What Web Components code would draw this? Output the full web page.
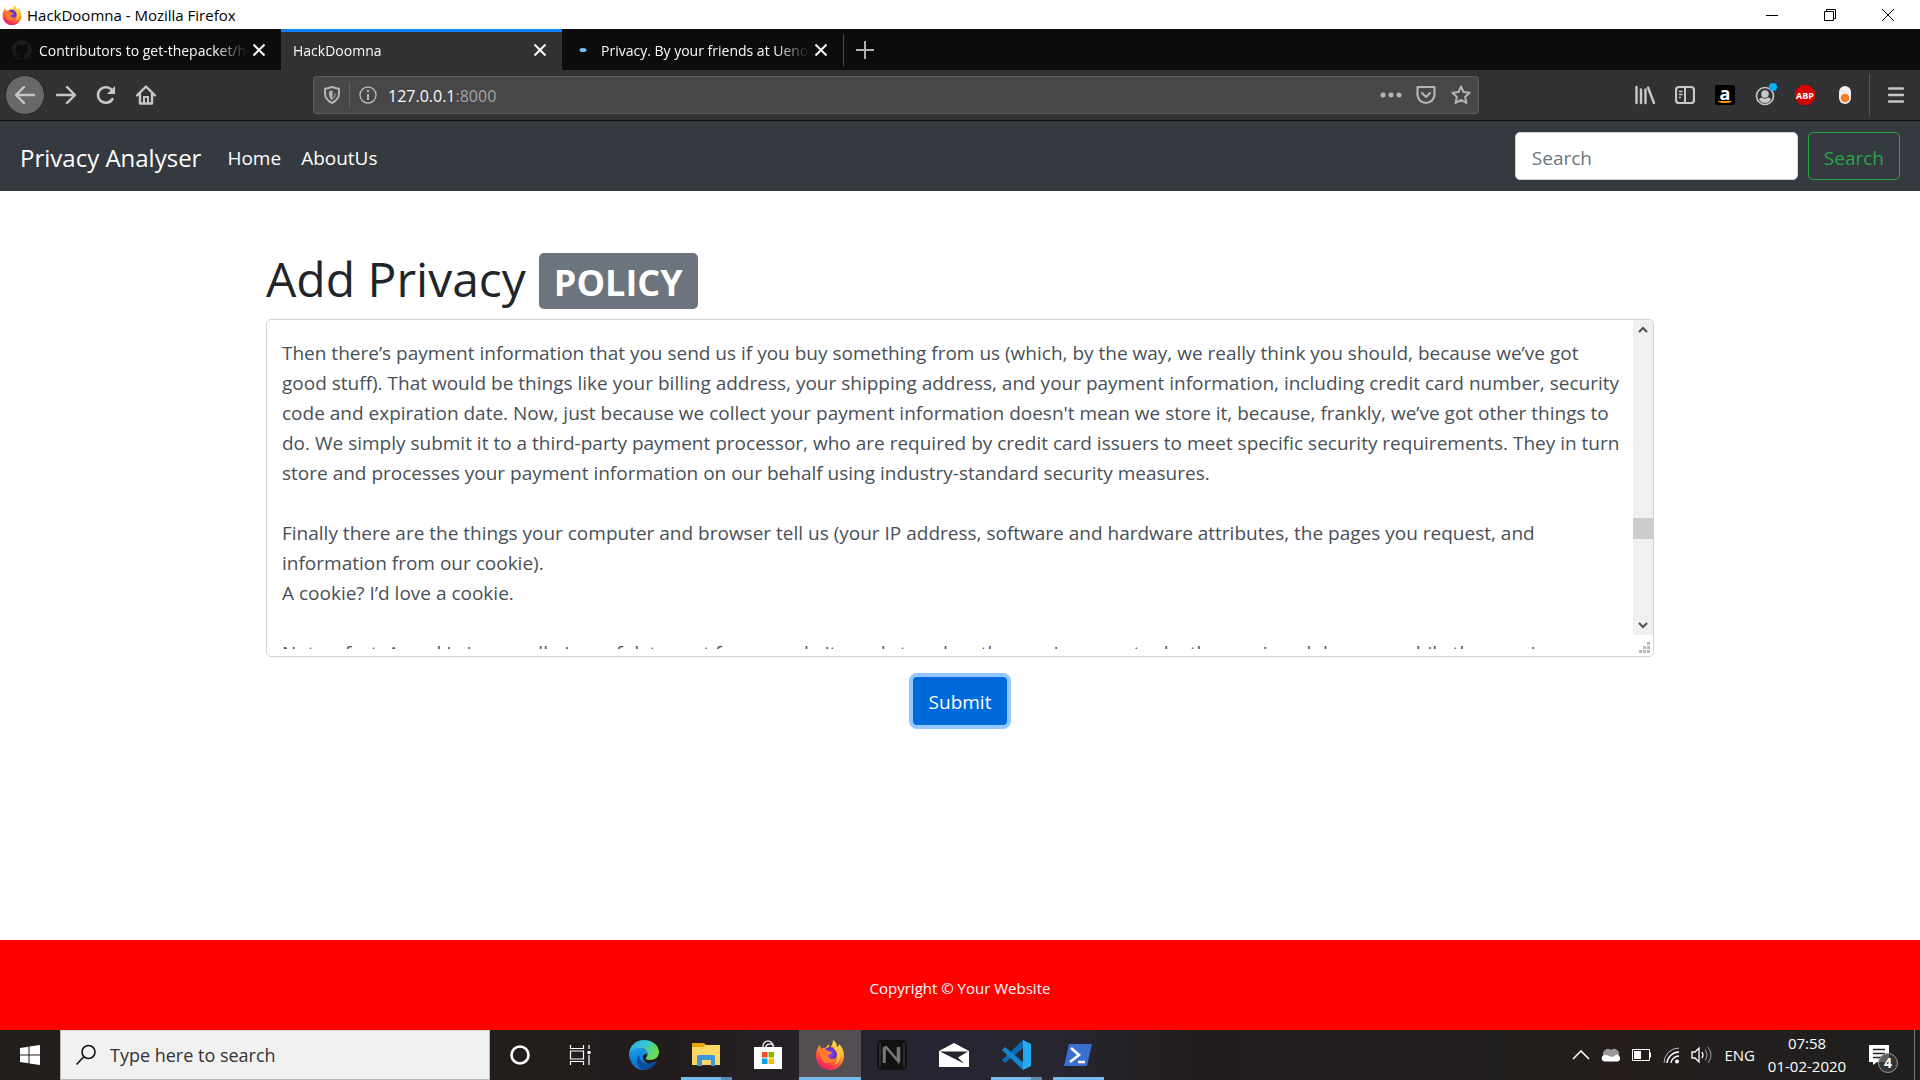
<!DOCTYPE html>
<html lang="en">
<head>
<meta charset="utf-8">
<title>HackDoomna</title>
<style>
  html, body { margin: 0; height: 100%; }
  body {
    font-family: "Open Sans", "Noto Sans", sans-serif;
    background: #fff;
    overflow: hidden;
  }
</style>
</head>
<body>
<desktop-shell>
  <window-title slot="window">HackDoomna - Mozilla Firefox</window-title>
  <tab-strip slot="window">
    <browser-tab icon="github">Contributors to get-thepacket/h</browser-tab>
    <browser-tab active>HackDoomna</browser-tab>
    <browser-tab icon="loading">Privacy. By your friends at Ueno</browser-tab>
  </tab-strip>
  <browser-toolbar slot="window"></browser-toolbar>
  <site-nav slot="window" brand="Privacy Analyser">
    <a href="#home">Home</a>
    <a href="#about">AboutUs</a>
  </site-nav>
  <policy-form slot="window"></policy-form>
  <site-footer slot="window">Copyright © Your Website</site-footer>
  <task-bar slot="taskbar"></task-bar>
</desktop-shell>

<script>
(function () {

  // shared reset, put in front of every element's own styles
  const base = `
    :host, *, *::before, *::after { box-sizing: border-box; }
    button, input, textarea { font: inherit; margin: 0; }
    button { border: 0; padding: 0; background: none; color: inherit; }
    svg { display: block; flex: none; }
  `;

  function define(name, css, html, setup) {
    const tmpl = document.createElement('template');
    tmpl.innerHTML = `<style>${base}${css}</style>${html}`;

    customElements.define(name, class extends HTMLElement {
      constructor() {
        super();
        this._shadowRoot = this.attachShadow({mode: 'open'});
        this._shadowRoot.appendChild(tmpl.content.cloneNode(true));
      }
      connectedCallback() {
        if (setup) setup.call(this, this._shadowRoot);
      }
    });
  }

  //Icons
  const ICONS = {
    firefox: ['0 0 30 30', `
      <defs>
        <linearGradient id="ff" x1=".8" y1="0" x2=".3" y2="1"><stop offset="0" stop-color="#fff44f"/><stop offset=".35" stop-color="#ffb02e"/><stop offset=".65" stop-color="#ff5a36"/><stop offset="1" stop-color="#f0186c"/></linearGradient>
        <radialGradient id="fp"><stop offset="0" stop-color="#8a4dff"/><stop offset="1" stop-color="#5a2bb8"/></radialGradient>
      </defs>
      <path fill="url(#ff)" d="M18 0c3 2 4 4 4 7 2-1 2-2 2-3 4 4 5 8 5 12 0 8-6 14-14 14S1 24 1 16c0-5 1-8 4-11l1 4c1-1 2-1 4-1l4-4c0 2 0 3 1 4 2-3 3-5 3-8z"/>
      <circle cx="15" cy="14" r="7" fill="url(#fp)"/>
      <path fill="#ff7a2e" d="M5 10c3-2 6-1 8 1l4 1c0 2-3 2-4 4 1 3 5 4 8 2-2 5-9 7-13 3-3-3-4-7-3-11z"/>
      <path fill="#ffc83a" d="M20 6c6 4 7 10 4 15-1 2-3 3-5 4 5-5 5-13-1-17z"/>`],
    github: ['0 0 16 16', `<path fill="currentColor" d="M8 0C3.6 0 0 3.6 0 8c0 3.5 2.3 6.500 5.500 7.600.4.1.5-.2.5-.4v-1.400c-2.200.5-2.700-1-2.700-1-.4-.9-.9-1.200-.9-1.200-.7-.5.1-.5.1-.5.8.1 1.200.8 1.200.8.7 1.300 1.900.9 2.300.7.1-.5.3-.9.5-1.100-1.800-.2-3.600-.9-3.600-4 0-.9.3-1.600.8-2.100-.1-.2-.4-1 .1-2.100 0 0 .7-.2 2.200.8a7.500 7.500 0 0 1 4 0c1.500-1 2.200-.8 2.200-.8.4 1.100.2 1.900.1 2.100.5.6.8 1.300.8 2.100 0 3.100-1.900 3.700-3.700 3.900.3.3.6.8.6 1.500v2.200c0 .2.1.5.6.4A8 8 0 0 0 8 0z"/>`],
    loading: ['0 0 20 20', `<ellipse cx="9" cy="10" rx="3.500" ry="2" fill="#75bfff"/>`],
    close: ['0 0 14 14', `<path d="M1.500 1.500l11 11M12.500 1.500l-11 11" stroke="currentColor" stroke-width="2"/>`],
    plus: ['0 0 18 18', `<path d="M9 0v18M0 9h18" stroke="currentColor" stroke-width="2"/>`],
    minimize: ['0 0 12 12', `<path d="M0 6.500h12" stroke="currentColor"/>`],
    restore: ['0 0 12 12', `<path d="M.5 2.500h9v9h-9zM2.500 2.500v-2h9v9h-2" fill="none" stroke="currentColor"/>`],
    exit: ['0 0 12 12', `<path d="M0 0l12 12M12 0L0 12" stroke="currentColor"/>`],
    back: ['0 0 20 20', `<path d="M19 10H2M9 2l-8 8 8 8" fill="none" stroke="currentColor" stroke-width="2.400" stroke-linecap="round" stroke-linejoin="round"/>`],
    forward: ['0 0 20 20', `<path d="M1 10h17M11 2l8 8-8 8" fill="none" stroke="currentColor" stroke-width="2.400" stroke-linecap="round" stroke-linejoin="round"/>`],
    reload: ['0 0 20 20', `<path d="M16.500 14a7.800 7.800 0 1 1 .3-7.500" fill="none" stroke="currentColor" stroke-width="2.500" stroke-linecap="round"/><path d="M19 1v8h-8z" fill="currentColor"/>`],
    home: ['0 0 20 20', `<path d="M1 10.500L10 1.500l9 9M4 9v9.500h12V9" fill="none" stroke="currentColor" stroke-width="2.400" stroke-linecap="round" stroke-linejoin="round"/><path d="M8 18v-6h4v6" fill="none" stroke="currentColor" stroke-width="2"/>`],
    shield: ['0 0 18 18', `<path d="M9 1l7 2v4c0 5-2.500 8-7 10-4.500-2-7-5-7-10V3z" fill="none" stroke="currentColor" stroke-width="2" stroke-linejoin="round"/><path d="M9 4.500L6 5.400V8c0 3 1 4.600 3 6z" fill="currentColor"/><path d="M9 4.500v9c2-1.400 3-3 3-6" fill="none" stroke="currentColor"/>`],
    info: ['0 0 18 18', `<circle cx="9" cy="9" r="8" fill="none" stroke="currentColor" stroke-width="1.500"/><circle cx="9" cy="5" r="1.300" fill="currentColor"/><path d="M9 8v6" stroke="currentColor" stroke-width="2"/>`],
    dots: ['0 0 22 20', `<g fill="currentColor"><circle cx="3" cy="10" r="2.500"/><circle cx="11" cy="10" r="2.500"/><circle cx="19" cy="10" r="2.500"/></g>`],
    pocket: ['0 0 20 20', `<path d="M1.500 2h17v7.500a8.500 8.500 0 0 1-17 0z" fill="none" stroke="currentColor" stroke-width="2.200" stroke-linejoin="round"/><path d="M6 8l4 4 4-4" fill="none" stroke="currentColor" stroke-width="2.200" stroke-linecap="round" stroke-linejoin="round"/>`],
    star: ['0 0 20 20', `<path d="M10 1.500l2.600 5.600 6 .7-4.500 4.100 1.300 6.100-5.400-3.100L4.600 18l1.300-6.100L1.400 7.800l6-.7z" fill="none" stroke="currentColor" stroke-width="2" stroke-linejoin="round"/>`],
    library: ['0 0 20 20', `<path d="M1.500 2v16M6 4.500V18M10.500 4.500V18M13 2.500L19 18" stroke="currentColor" stroke-width="2.400" stroke-linecap="round"/>`],
    sidebar: ['0 0 20 20', `<rect x="1" y="2" width="18" height="16" rx="3" fill="none" stroke="currentColor" stroke-width="2.200"/><path d="M10 2v16" stroke="currentColor" stroke-width="2"/><path d="M4 6.500h3.500M4 9.500h3.500M4 12.500h2" stroke="currentColor" stroke-width="1.400"/>`],
    account: ['0 0 24 24', `<circle cx="12" cy="13" r="8.500" fill="none" stroke="currentColor" stroke-width="1.600"/><circle cx="12" cy="11" r="3.800" fill="currentColor"/><path d="M6 16c1.500-1.500 2.500-1.500 3-1.500 2 1.500 4 1.500 6 0 .5 0 1.500 0 3 1.500-1 2.500-3 4-6 4s-5-1.500-6-4z" fill="currentColor"/><circle cx="20" cy="4" r="4" fill="#00b3f4"/>`],
    toggle: ['0 0 12 20', `<rect x="0" y="1" width="12" height="18" rx="6" fill="#f0f0f0"/><circle cx="6" cy="13" r="4.300" fill="#f47a2c"/>`],
    menu: ['0 0 16 18', `<path d="M1 2.500h14M1 9h14M1 15.500h14" stroke="currentColor" stroke-width="2.400" stroke-linecap="round"/>`],
    up: ['0 0 10 10', `<path d="M1 7l4-4 4 4" fill="none" stroke="currentColor" stroke-width="2"/>`],
    down: ['0 0 10 10', `<path d="M1 3l4 4 4-4" fill="none" stroke="currentColor" stroke-width="2"/>`],
    grip: ['0 0 12 12', `<path fill="currentColor" d="M8 0h3v3H8zM4 4h3v3H4zM8 4h3v3H8zM0 8h3v3H0zM4 8h3v3H4zM8 8h3v3H8z"/>`],

    //Taskbar
    windows: ['0 0 20 20', `<path fill="currentColor" d="M0 3l8.500-1.200v7.700H0zM9.500 1.600L20 0v9.500H9.500zM0 10.500h8.500v7.700L0 17zM9.500 10.500H20V20L9.500 18.400z"/>`],
    search: ['0 0 22 22', `<circle cx="13.500" cy="8" r="6.500" fill="none" stroke="currentColor" stroke-width="1.600"/><path d="M9 12.500L1.500 20.500" stroke="currentColor" stroke-width="1.600"/>`],
    cortana: ['0 0 20 20', `<circle cx="10" cy="10" r="8.500" fill="none" stroke="currentColor" stroke-width="2.600"/>`],
    taskview: ['0 0 22 20', `<path d="M1.500 0v3.500h13V0M1.500 20v-3.500h13V20M1.500 6h13v8h-13zM20 0v4M20 10v10" fill="none" stroke="currentColor" stroke-width="1.200"/><rect x="18.500" y="6" width="3" height="3" fill="currentColor"/>`],
    edge: ['0 0 30 30', `
      <defs>
        <linearGradient id="ea" x1="0" y1="0" x2="1" y2=".5"><stop offset="0" stop-color="#28aeea"/><stop offset=".5" stop-color="#35c5d3"/><stop offset="1" stop-color="#6edb4d"/></linearGradient>
        <linearGradient id="eb" x1="0" y1="0" x2="0" y2="1"><stop offset="0" stop-color="#1d9be8"/><stop offset="1" stop-color="#0a6ccf"/></linearGradient>
      </defs>
      <path fill="url(#eb)" d="M0 13C2 8 7 6 12 8c5 1 7 4 7 6-6-2-8 7 1 10l3 2c-3 3-7 4-11 4C4 28 0 21 0 13z"/>
      <path fill="#0b4f9c" d="M10 15c0 8 8 11 18 6-3 6-8 9-14 9-6-2-8-11-4-15z"/>
      <path fill="url(#ea)" d="M0 14C1 5 7 0 15 0c9 0 15 6 15 12 0 5-4 8-9 8-3 0-5-1-4-2 4-5 0-10-6-10-5 0-9 2-11 6z"/>`],
    explorer: ['0 0 28 26', `<path fill="#e5a50a" d="M0 1h12l3 3v5H0z"/><path fill="#ffd767" d="M0 5h11l2-2h15v20H0z"/><path fill="#3c97dd" d="M5 15a2 2 0 0 1 2-2h14a2 2 0 0 1 2 2v9h-4v-6h-9v6H5z"/>`],
    store: ['0 0 28 30', `<path d="M9 8V6a5 5 0 0 1 10 0v2M12 8V6a5 5 0 0 1 8 0" fill="none" stroke="#ddd" stroke-width="1.500"/><path fill="#fff" d="M0 7h28v22H0z"/><path fill="#f25022" d="M8 12h5.500v5.500H8z"/><path fill="#7fba00" d="M14.500 12H20v5.500h-5.500z"/><path fill="#00a4ef" d="M8 18.500h5.500V24H8z"/><path fill="#ffb900" d="M14.500 18.500H20V24h-5.500z"/>`],
    nox: ['0 0 30 30', `<rect width="30" height="30" rx="5" fill="#111"/><path d="M3 3v24M27 3v24" stroke="#2c2c2c" stroke-width="2"/><path d="M7 23V8l2-1 12 14V7M7.500 23V9" fill="none" stroke="#777" stroke-width="2.600"/><path d="M22 7v15" stroke="#777" stroke-width="2.600"/>`],
    mail: ['0 0 30 26', `<path fill="#fff" d="M0 9L15 1l15 8v16H0z"/><path fill="#252431" d="M1 9.500h28l-10 6 6 6-10-5z"/>`],
    vscode: ['0 0 30 30', `<path fill="#0a6cb8" d="M22 0v8L4 23l-3-3z"/><path fill="#1685d0" d="M4 7L1 10l21 20v-8z"/><path fill="#29a9f2" d="M22 0l8 4v22l-8 4z"/>`],
    powershell: ['0 0 28 22', `<path fill="#3a6fd0" d="M5 0h23l-5 22H0z"/><path d="M7 4l8 7-9 7M14 18h7" fill="none" stroke="#fff" stroke-width="2.600"/>`],
    chevron: ['0 0 18 10', `<path d="M1 9l8-8 8 8" fill="none" stroke="currentColor" stroke-width="1.600"/>`],
    cloud: ['0 0 20 14', `<path d="M3 9a5 5 0 0 1 7-7 5 5 0 0 1 8 5L8 13z" fill="#999"/><path d="M3.500 13.500a3.300 3.300 0 0 1 0-6.500c2 0 3 0 4.500 1l3 1 4-2a3.300 3.300 0 1 1 1.500 6.500z" fill="#fff"/>`],
    battery: ['0 0 20 12', `<path d="M.5.500h17v11H.5zM18.500 3.500v5" fill="none" stroke="currentColor"/><path d="M2 2h7v8H2z" fill="currentColor"/>`],
    wifi: ['0 0 17 17', `<path d="M1 16A15 15 0 0 1 16 1" fill="none" stroke="#bbb"/><path d="M4 16A12 12 0 0 1 16 5M8 16a8 8 0 0 1 8-7" fill="none" stroke="currentColor" stroke-width="1.400"/><circle cx="14" cy="14.500" r="2" fill="currentColor"/>`],
    volume: ['0 0 22 18', `<path d="M1 6h3l4-4v14l-4-4H1z" fill="none" stroke="currentColor" stroke-width="1.300"/><path d="M11 6q2 3 0 6" fill="none" stroke="currentColor" stroke-width="1.300"/><path d="M14 3.500q4 5.500 0 11M17 1q6 8 0 16" fill="none" stroke="#888" stroke-width="1.200"/>`],
    note: ['0 0 20 20', `<path d="M0 0h20v17H8l-4 3v-3H0z" fill="#fff"/><path d="M4 4.500h12M4 8.500h12M4 12.500h8" stroke="#222" stroke-width="1.300"/>`]
  };

  //Taking name and size in, svg markup out
  function icon(name, width, height) {
    const [viewBox, body] = ICONS[name];
    return `<svg width="${width}" height="${height || width}" viewBox="${viewBox}" aria-hidden="true">${body}</svg>`;
  }

  define('desktop-shell', `
    :host { display: flex; flex-direction: column; min-height: 100vh; }
    .window { flex: 1; display: flex; flex-direction: column; }
  `, `
    <div class="window"><slot name="window"></slot></div>
    <slot name="taskbar"></slot>
  `);

  define('window-title', `
    :host { display: flex; align-items: center; height: 29px; padding: 0 3px 0 2px; gap: 5px; font-size: 15px; color: #000; background: #fff; }
    .text { flex: 1; }
    .controls { display: flex; }
    button { width: 58px; height: 29px; display: grid; place-items: center; }
  `, `
    ${icon('firefox', 20)}
    <span class="text"><slot></slot></span>
    <div class="controls">
      <button aria-label="Minimize">${icon('minimize', 12)}</button>
      <button aria-label="Restore">${icon('restore', 12)}</button>
      <button aria-label="Close">${icon('exit', 12)}</button>
    </div>
  `);

  define('tab-strip', `
    :host { display: flex; height: 41px; background: #0c0c0d; }
    button { width: 42px; display: grid; place-items: center; color: #b1b1b3; border-left: 1px solid transparent; border-image: linear-gradient(#0c0c0d 6px, #4a4a4b 6px, #4a4a4b 36px, #0c0c0d 36px) 1; }
  `, `
    <slot></slot>
    <button aria-label="New tab">${icon('plus', 18)}</button>
  `);

  define('browser-tab', `
    :host { display: flex; align-items: center; width: 281px; padding: 0 10px 2px 12px; font-size: 14px; color: #f9f9fa; border-top: 3px solid transparent; }
    :host([active]) { background: #323234; border-top-color: #0a84ff; }
    .icon { color: #1d1d1f; }
    :host([icon]) .icon { margin-right: 7px; }
    .text { flex: 1; min-width: 0; overflow: hidden; white-space: nowrap; mask-image: linear-gradient(to left, transparent, #000 32px); }
    button { width: 24px; height: 24px; flex: none; display: grid; place-items: center; }
  `, `
    <span class="icon"></span>
    <span class="text"><slot></slot></span>
    <button aria-label="Close tab">${icon('close', 14)}</button>
  `, function (root) {
    const name = this.getAttribute('icon');
    if (name) root.querySelector('.icon').innerHTML = icon(name, 20);
  });

  define('browser-toolbar', `
    :host { display: flex; align-items: center; height: 51px; padding: 0 4px 0 5px; background: #323234; border-bottom: 1px solid #0c0c0d; color: #c8c8c9; }
    button { width: 40px; height: 40px; display: grid; place-items: center; flex: none; }
    .history { display: flex; }
    .back { margin-right: 1px; background: #686869; border-radius: 50%; border: 1px solid #252526; }
    .address { flex: 1; display: flex; align-items: center; height: 38px; margin: 0 146px 0 147px; background: #474749; border: 1px solid #5b5b5d; border-radius: 3px; color: #b4b4b6; }
    .address button { width: 35px; height: 36px; }
    .rule { width: 1px; height: 26px; background: #636365; }
    .url { flex: 1; display: flex; padding: 2px 0 0 3px; font-size: 16px; color: #a4a4a6; }
    .url input { field-sizing: content; width: auto; border: 0; outline: 0; padding: 0; background: none; color: #f9f9fa; }
    .amazon { display: grid; place-items: center; align-content: center; width: 20px; height: 20px; border-radius: 2px; background: #000; color: #fff; font-size: 18px; font-weight: 700; line-height: 12px; }
    .amazon i { width: 14px; height: 4px; border-bottom: 2px solid #f90; border-radius: 50%; }
    .abp { display: grid; place-items: center; width: 20px; height: 20px; background: #d50000; color: #fff; font-size: 9px; font-weight: 700; clip-path: polygon(30% 0, 70% 0, 100% 30%, 100% 70%, 70% 100%, 30% 100%, 0 70%, 0 30%); }
    .divider { width: 1px; height: 42px; margin-left: 4px; margin-right: 6px; background: #59595b; }
  `, `
    <div class="history">
      <button class="back" aria-label="Back">${icon('back', 20)}</button>
      <button aria-label="Forward">${icon('forward', 20)}</button>
      <button aria-label="Reload">${icon('reload', 20)}</button>
      <button aria-label="Home">${icon('home', 20)}</button>
    </div>
    <div class="address">
      <button aria-label="Tracking protection">${icon('shield', 18)}</button>
      <div class="rule"></div>
      <button aria-label="Site information">${icon('info', 18)}</button>
      <label class="url"><input type="text" aria-label="Address" value="127.0.0.1"><span>:8000</span></label>
      <button aria-label="Page actions">${icon('dots', 22, 20)}</button>
      <button aria-label="Save to Pocket">${icon('pocket', 20)}</button>
      <button aria-label="Bookmark">${icon('star', 20)}</button>
    </div>
    <button aria-label="Library">${icon('library', 20)}</button>
    <button aria-label="Sidebars">${icon('sidebar', 20)}</button>
    <button aria-label="Amazon Assistant"><span class="amazon">a<i></i></span></button>
    <button aria-label="Account">${icon('account', 24)}</button>
    <button aria-label="Adblock Plus"><span class="abp">ABP</span></button>
    <button aria-label="Toggle">${icon('toggle', 12, 20)}</button>
    <div class="divider"></div>
    <button aria-label="Menu">${icon('menu', 16, 18)}</button>
  `);

  define('site-nav', `
    :host { display: flex; align-items: center; height: 70px; padding: 0 20px; background: #343a40; color: #fff; font-size: 19px; }
    .brand { font-size: 24px; color: inherit; text-decoration: none; margin-right: 16px; padding-top: 2px; }
    nav { display: flex; flex: 1; }
    ::slotted(a) { padding: 12px 10px 9px; color: #fff; text-decoration: none; }
    form { display: flex; gap: 10px; }
    input { width: 283px; height: 48px; padding: 3px 16px 0; border: 1px solid #ced4da; border-radius: 5px; background: #fff; }
    input::placeholder { color: #6c757d; opacity: 1; }
    button { height: 48px; padding: 3px 15px 0; border: 1px solid #28a745; border-radius: 5px; color: #28a745; }
  `, `
    <a class="brand" href="#"></a>
    <nav><slot></slot></nav>
    <form>
      <input type="search" placeholder="Search" aria-label="Search">
      <button type="button">Search</button>
    </form>
  `, function (root) {
    root.querySelector('.brand').textContent = this.getAttribute('brand');
  });

  define('scroll-rail', `
    :host { display: flex; flex-direction: column; width: 20px; color: #505050; }
    .rail { flex: 1; display: flex; flex-direction: column; background: #f0f0f0; }
    button { height: 20px; display: grid; place-items: center; }
    .before { flex: 178; }
    .thumb { height: 21px; background: #cdcdcd; }
    .after { flex: 76; }
    .corner { height: 21px; display: grid; place-items: end; padding: 0 2px 2px 0; color: #b8b8b8; }
  `, `
    <div class="rail">
      <button aria-label="Scroll up">${icon('up', 10)}</button>
      <div class="before"></div>
      <div class="thumb"></div>
      <div class="after"></div>
      <button aria-label="Scroll down">${icon('down', 10)}</button>
    </div>
    <div class="corner">${icon('grip', 12)}</div>
  `);

  define('policy-form', `
    :host { flex: 1; display: block; padding: 60px 20px; color: #212529; }
    form { max-width: 1388px; margin: 0 auto; display: flex; flex-direction: column; }
    h1 { display: flex; align-items: center; gap: 13px; height: 60px; margin: 0 0 8px; font-size: 48px; font-weight: 400; line-height: 56px; }
    h1 label { align-self: flex-start; }
    .badge { height: 56px; padding: 0 15px; border-radius: 5px; background: #6c757d; color: #fff; font-size: 36px; font-weight: 700; line-height: 60px; }
    .box { display: flex; height: 338px; border: 1px solid #ced4da; border-radius: 5px; overflow: hidden; }
    textarea { flex: 1; min-width: 0; margin: 7px 0; padding: 11px 8px 0 15px; border: 0; outline: 0; resize: none; background: none; color: #495057; font-size: 19px; line-height: 30px; scrollbar-width: none; }
    .submit { align-self: center; height: 48px; margin-top: 20px; padding: 2px 16px 0; border-radius: 4px; background: #0069d9; color: #fff; font-size: 19px; box-shadow: 0 0 0 4px #92c7ff; }
  `, `
    <form>
      <h1><label for="policy">Add Privacy</label> <span class="badge">POLICY</span></h1>
      <div class="box">
        <textarea id="policy" spellcheck="false">Then there’s payment information that you send us if you buy something from us (which, by the way, we really think you should, because we’ve got good stuff). That would be things like your billing address, your shipping address, and your payment information, including credit card number, security code and expiration date. Now, just because we collect your payment information doesn't mean we store it, because, frankly, we’ve got other things to do. We simply submit it to a third-party payment processor, who are required by credit card issuers to meet specific security requirements. They in turn store and processes your payment information on our behalf using industry-standard security measures.

Finally there are the things your computer and browser tell us (your IP address, software and hardware attributes, the pages you request, and information from our cookie).
A cookie? I’d love a cookie.

Not so fast. A cookie is a small piece of data sent from a website and stored on the user's computer by the user's web browser while the user is</textarea>
        <scroll-rail></scroll-rail>
      </div>
      <button class="submit" type="button">Submit</button>
    </form>
  `);

  define('site-footer', `
    :host { display: grid; place-items: center; height: 90px; padding-top: 6px; background: #f00; color: #fff; font-size: 15px; }
  `, `<span><slot></slot></span>`);

  define('task-bar', `
    :host { display: flex; align-items: stretch; height: 50px; color: #fff; background: linear-gradient(90deg, #231f1d 0, #231c1c 35%, #262633 48%, #272631 55%, #221d1d 62%, #211f1d 78%, #241d1c 84%, #20201f 100%); }
    button { width: 60px; display: grid; place-items: center; flex: none; }
    .search { display: flex; align-items: center; width: 430px; padding-left: 14px; gap: 13px; background: #f1f1f1; border: 1px solid #b9b9b9; border-top-color: #d8d8d8; color: #111; }
    .search input { flex: 1; min-width: 0; border: 0; outline: 0; padding: 0; background: none; font-size: 18px; }
    .search input::placeholder { color: #333; opacity: 1; }
    .apps { display: flex; flex: 1; padding-left: 3px; }
    .apps button { width: 62px; }
    .apps button.open { background: linear-gradient(#76b9ed, #76b9ed) center bottom / 51px 3px no-repeat; }
    .apps button.many { background: linear-gradient(90deg, #76b9ed 40px, #5d8ab0 40px) center bottom / 51px 3px no-repeat; }
    .apps button.active { background: linear-gradient(#76b9ed, #76b9ed) center bottom / 100% 3px no-repeat #524e51; }
    .tray { display: flex; align-items: center; gap: 11px; font-size: 15px; }
    .tray time { width: 82px; margin-right: 10px; text-align: center; line-height: 23px; }
    .notes { position: relative; width: 45px; place-items: center start; }
    .notes span { position: absolute; left: 9px; top: 8px; width: 20px; height: 20px; border: 1px solid #999; border-radius: 50%; background: #3a3a3acc; font-size: 14px; font-weight: 700; line-height: 18px; }
    .desktop { width: 6px; border-left: 1px solid #777; }
  `, `
    <button aria-label="Start">${icon('windows', 20)}</button>
    <label class="search">${icon('search', 22)}<input type="text" placeholder="Type here to search"></label>
    <button aria-label="Cortana">${icon('cortana', 20)}</button>
    <button aria-label="Task view">${icon('taskview', 22, 20)}</button>
    <div class="apps">
      <button aria-label="Edge">${icon('edge', 30)}</button>
      <button class="many" aria-label="File Explorer">${icon('explorer', 28, 26)}</button>
      <button aria-label="Store">${icon('store', 28, 30)}</button>
      <button class="active" aria-label="Firefox">${icon('firefox', 30)}</button>
      <button aria-label="Nox">${icon('nox', 30)}</button>
      <button aria-label="Mail">${icon('mail', 30, 26)}</button>
      <button class="many" aria-label="Code">${icon('vscode', 30)}</button>
      <button class="open" aria-label="PowerShell">${icon('powershell', 28, 22)}</button>
    </div>
    <div class="tray">
      ${icon('chevron', 18, 10)}
      ${icon('cloud', 20, 14)}
      ${icon('battery', 20, 12)}
      ${icon('wifi', 17)}
      ${icon('volume', 22, 18)}
      <span>ENG</span>
      <time datetime="2020-02-01T07:58">07:58<br>01-02-2020</time>
      <button class="notes" aria-label="Notifications">${icon('note', 20)}<span>4</span></button>
    </div>
    <button class="desktop" aria-label="Show desktop"></button>
  `);

})();
</script>
</body>
</html>
